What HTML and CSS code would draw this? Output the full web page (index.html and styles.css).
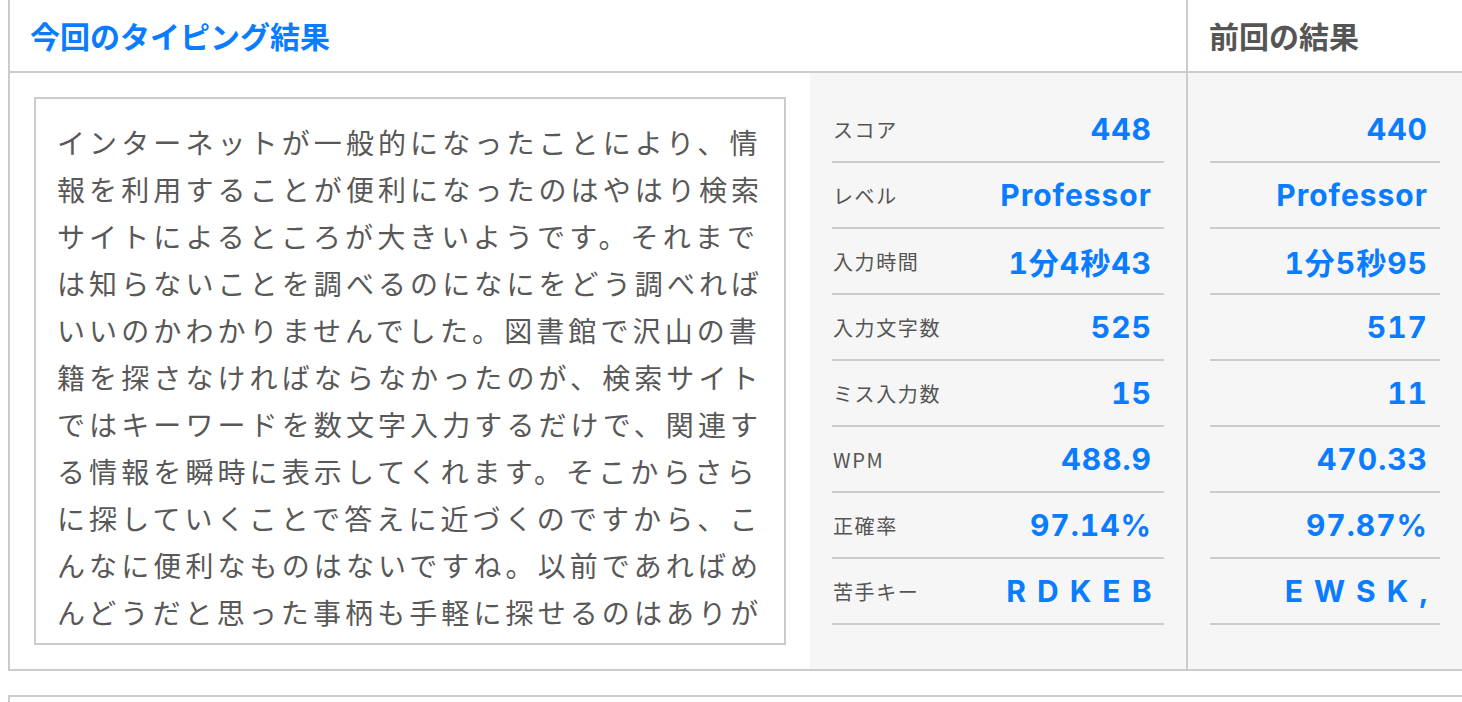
FILE: index.html
```html
<!DOCTYPE html>
<html lang="ja">
<head>
<meta charset="utf-8">
<title>タイピング結果</title>
<link rel="stylesheet" href="styles.css">
</head>
<body>
<section class="panel">
  <h2 class="panel-head head-current">今回のタイピング結果</h2>
  <h2 class="panel-head head-prev">前回の結果</h2>
  <div class="body-current">
    <div class="reading">
      <div class="reading-box">インターネットが一般的になったことにより、情報を利用することが便利になったのはやはり検索サイトによるところが大きいようです。それまでは知らないことを調べるのになにをどう調べればいいのかわかりませんでした。図書館で沢山の書籍を探さなければならなかったのが、検索サイトではキーワードを数文字入力するだけで、関連する情報を瞬時に表示してくれます。そこからさらに探していくことで答えに近づくのですから、こんなに便利なものはないですね。以前であればめんどうだと思った事柄も手軽に探せるのはありがたいことです。</div>
    </div>
    <dl class="stats">
      <div class="stat"><dt>スコア</dt><dd>448</dd></div>
      <div class="stat"><dt>レベル</dt><dd>Professor</dd></div>
      <div class="stat"><dt>入力時間</dt><dd>1分4秒43</dd></div>
      <div class="stat"><dt>入力文字数</dt><dd>525</dd></div>
      <div class="stat"><dt>ミス入力数</dt><dd>15</dd></div>
      <div class="stat"><dt>WPM</dt><dd>488.9</dd></div>
      <div class="stat"><dt>正確率</dt><dd>97.14%</dd></div>
      <div class="stat"><dt>苦手キー</dt><dd class="keys">R D K E B</dd></div>
    </dl>
  </div>
  <div class="body-prev">
    <dl class="stats stats-prev">
      <div class="stat"><dd>440</dd></div>
      <div class="stat"><dd>Professor</dd></div>
      <div class="stat"><dd>1分5秒95</dd></div>
      <div class="stat"><dd>517</dd></div>
      <div class="stat"><dd>11</dd></div>
      <div class="stat"><dd>470.33</dd></div>
      <div class="stat"><dd>97.87%</dd></div>
      <div class="stat"><dd class="keys">E W S K ,</dd></div>
    </dl>
  </div>
</section>
<section class="panel panel-next"></section>
</body>
</html>
```
FILE: styles.css
```css
html, body {
  margin: 0;
  padding: 0;
  overflow: hidden;
  background: #fff;
}

body {
  font-family: "Noto Sans CJK JP", "Noto Sans", sans-serif;
  color: #555;
}

.panel {
  margin: -2px 0 0 8px;
  width: 1456px;
  box-sizing: border-box;
  border: 2px solid #cccccc;
  display: grid;
  grid-template-columns: 1176px 276px;
  grid-template-rows: auto auto;
}

.panel-head {
  margin: 0;
  height: 71px;
  line-height: 71px;
  font-size: 30px;
  font-weight: 700;
  border-bottom: 2px solid #cccccc;
  box-sizing: content-box;
}

.head-current {
  color: #0a7cff;
  padding-left: 20px;
}

.head-prev {
  color: #555;
  padding-left: 21px;
  border-left: 2px solid #cccccc;
}

.body-current {
  display: flex;
}

.reading {
  width: 800px;
  box-sizing: border-box;
  padding: 24px;
}

.reading-box {
  height: 548px;
  box-sizing: border-box;
  border: 2px solid #cccccc;
  padding: 20px 20px 0 21px;
  overflow: hidden;
  font-size: 28px;
  line-height: 47px;
  letter-spacing: 4.1px;
  color: #585858;
  line-break: strict;
}

.stats {
  margin: 0;
  background: #f6f6f6;
  width: 376px;
  box-sizing: border-box;
  padding: 24px 22px 0 22px;
}

.body-prev {
  border-left: 2px solid #cccccc;
  background: #f6f6f6;
}

.stats-prev {
  width: 274px;
}

.stat {
  height: 64px;
  border-bottom: 2px solid #cccccc;
  display: flex;
  align-items: center;
  justify-content: space-between;
}

.stat dt {
  font-size: 20px;
  letter-spacing: 1.6px;
  color: #555;
  padding-left: 1px;
}

.stat dd {
  margin: 0 0 0 auto;
  padding-right: 12px;
  font-family: "Inter", "Noto Sans CJK JP", sans-serif;
  font-weight: 700;
  font-size: 30px;
  letter-spacing: 1px;
  font-feature-settings: "tnum";
  color: #0a7cff;
}

.stat dd.keys {
  letter-spacing: 1.5px;
  padding-right: 11px;
}

.panel-next {
  margin-top: 24px;
  height: 60px;
  display: block;
}
```
